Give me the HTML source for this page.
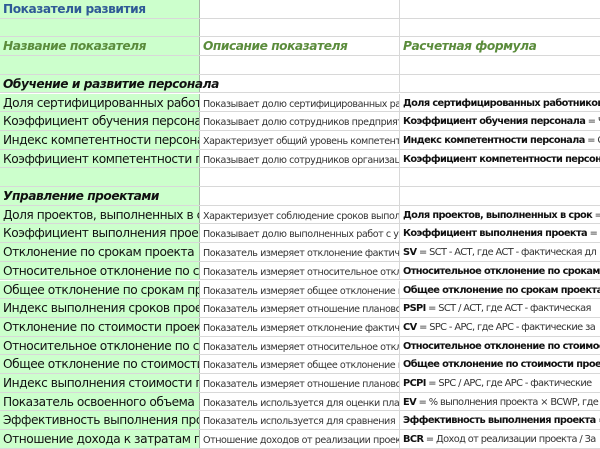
<!DOCTYPE html>
<html><head><meta charset="utf-8"><style>
body{margin:0;width:600px;height:449px;overflow:hidden;background:#fff;font-family:"DejaVu Sans","Liberation Sans",sans-serif}
.r{position:absolute;left:0;width:600px;height:18.7px;border-bottom:1px solid #d8d8d8;box-sizing:border-box}
.c{position:absolute;top:0;height:100%;overflow:hidden;white-space:nowrap;box-sizing:border-box;line-height:18px}
.a{left:0;width:200px;background:#ccffcc;border-right:1px solid #a8b8a8;font-size:12.2px;letter-spacing:-0.45px;color:#111;padding-left:3px}
.b{left:200px;width:200px;border-right:1px solid #d8d8d8;font-size:9.6px;letter-spacing:-0.45px;color:#333;padding-left:3px;padding-top:2px}
.cc{left:400px;width:200px;font-size:9.8px;letter-spacing:-0.6px;color:#333;padding-left:3px;padding-top:1px}
.cc b{color:#111}
.sec{overflow:visible;font-weight:bold;font-style:italic;color:#111;z-index:2}
.hd{font-weight:bold;font-style:italic;color:#5b8c3c;font-size:12.2px;letter-spacing:-0.45px;padding-top:0}
</style></head><body>
<div class="r" style="top:0"><div class="c a" style="font-weight:bold;color:#2f5a96">Показатели развития</div><div class="c b"></div><div class="c cc"></div></div>
<div class="r" style="top:18.7px"><div class="c a"></div><div class="c b"></div><div class="c cc"></div></div>
<div class="r" style="top:37.4px"><div class="c a hd">Название показателя</div><div class="c b hd" style="padding-top:0">Описание показателя</div><div class="c cc hd" style="padding-top:0">Расчетная формула</div></div>
<div class="r" style="top:56.1px"><div class="c a"></div><div class="c b"></div><div class="c cc"></div></div>
<div class="r" style="top:74.8px"><div class="c b"></div><div class="c cc"></div><div class="c a sec">Обучение и развитие персонала</div></div>
<div class="r" style="top:93.5px"><div class="c a">Доля сертифицированных работников</div><div class="c b">Показывает долю сертифицированных работников</div><div class="c cc"><b>Доля сертифицированных работников</b> = Ч</div></div>
<div class="r" style="top:112.2px"><div class="c a">Коэффициент обучения персонала</div><div class="c b">Показывает долю сотрудников предприятия</div><div class="c cc"><b>Коэффициент обучения персонала</b> = Ч</div></div>
<div class="r" style="top:130.9px"><div class="c a">Индекс компетентности персонала</div><div class="c b">Характеризует общий уровень компетентности</div><div class="c cc"><b>Индекс компетентности персонала</b> = С</div></div>
<div class="r" style="top:149.6px"><div class="c a">Коэффициент компетентности персонала</div><div class="c b">Показывает долю сотрудников организации</div><div class="c cc"><b>Коэффициент компетентности персонала</b></div></div>
<div class="r" style="top:168.3px"><div class="c a"></div><div class="c b"></div><div class="c cc"></div></div>
<div class="r" style="top:187px"><div class="c b"></div><div class="c cc"></div><div class="c a sec">Управление проектами</div></div>
<div class="r" style="top:205.7px"><div class="c a">Доля проектов, выполненных в срок</div><div class="c b">Характеризует соблюдение сроков выполнения</div><div class="c cc"><b>Доля проектов, выполненных в срок</b> = </div></div>
<div class="r" style="top:224.4px"><div class="c a">Коэффициент выполнения проекта</div><div class="c b">Показывает долю выполненных работ с учетом</div><div class="c cc"><b>Коэффициент выполнения проекта</b> = Ф</div></div>
<div class="r" style="top:243.1px"><div class="c a">Отклонение по срокам проекта</div><div class="c b">Показатель измеряет отклонение фактического</div><div class="c cc"><b>SV</b> = SCT - ACT, где ACT - фактическая дл</div></div>
<div class="r" style="top:261.8px"><div class="c a">Относительное отклонение по срокам</div><div class="c b">Показатель измеряет относительное отклонение</div><div class="c cc"><b>Относительное отклонение по срокам пр</b></div></div>
<div class="r" style="top:280.5px"><div class="c a">Общее отклонение по срокам проекта</div><div class="c b">Показатель измеряет общее отклонение по</div><div class="c cc"><b>Общее отклонение по срокам проекта</b> =</div></div>
<div class="r" style="top:299.2px"><div class="c a">Индекс выполнения сроков проекта</div><div class="c b">Показатель измеряет отношение планового</div><div class="c cc"><b>PSPI</b> = SCT / ACT, где ACT - фактическая</div></div>
<div class="r" style="top:317.9px"><div class="c a">Отклонение по стоимости проекта</div><div class="c b">Показатель измеряет отклонение фактических</div><div class="c cc"><b>CV</b> = SPC - APC, где APC - фактические за</div></div>
<div class="r" style="top:336.6px"><div class="c a">Относительное отклонение по стоимости</div><div class="c b">Показатель измеряет относительное отклонение</div><div class="c cc"><b>Относительное отклонение по стоимости</b></div></div>
<div class="r" style="top:355.3px"><div class="c a">Общее отклонение по стоимости проекта</div><div class="c b">Показатель измеряет общее отклонение по</div><div class="c cc"><b>Общее отклонение по стоимости проекта</b></div></div>
<div class="r" style="top:374px"><div class="c a">Индекс выполнения стоимости проекта</div><div class="c b">Показатель измеряет отношение планового</div><div class="c cc"><b>PCPI</b> = SPC / APC, где APC - фактические</div></div>
<div class="r" style="top:392.7px"><div class="c a">Показатель освоенного объема</div><div class="c b">Показатель используется для оценки плана</div><div class="c cc"><b>EV</b> = % выполнения проекта × BCWP, где</div></div>
<div class="r" style="top:411.4px"><div class="c a">Эффективность выполнения проекта</div><div class="c b">Показатель используется для сравнения</div><div class="c cc"><b>Эффективность выполнения проекта</b> = </div></div>
<div class="r" style="top:430.1px"><div class="c a">Отношение дохода к затратам проекта</div><div class="c b">Отношение доходов от реализации проекта</div><div class="c cc"><b>BCR</b> = Доход от реализации проекта / За</div></div>
</body></html>
